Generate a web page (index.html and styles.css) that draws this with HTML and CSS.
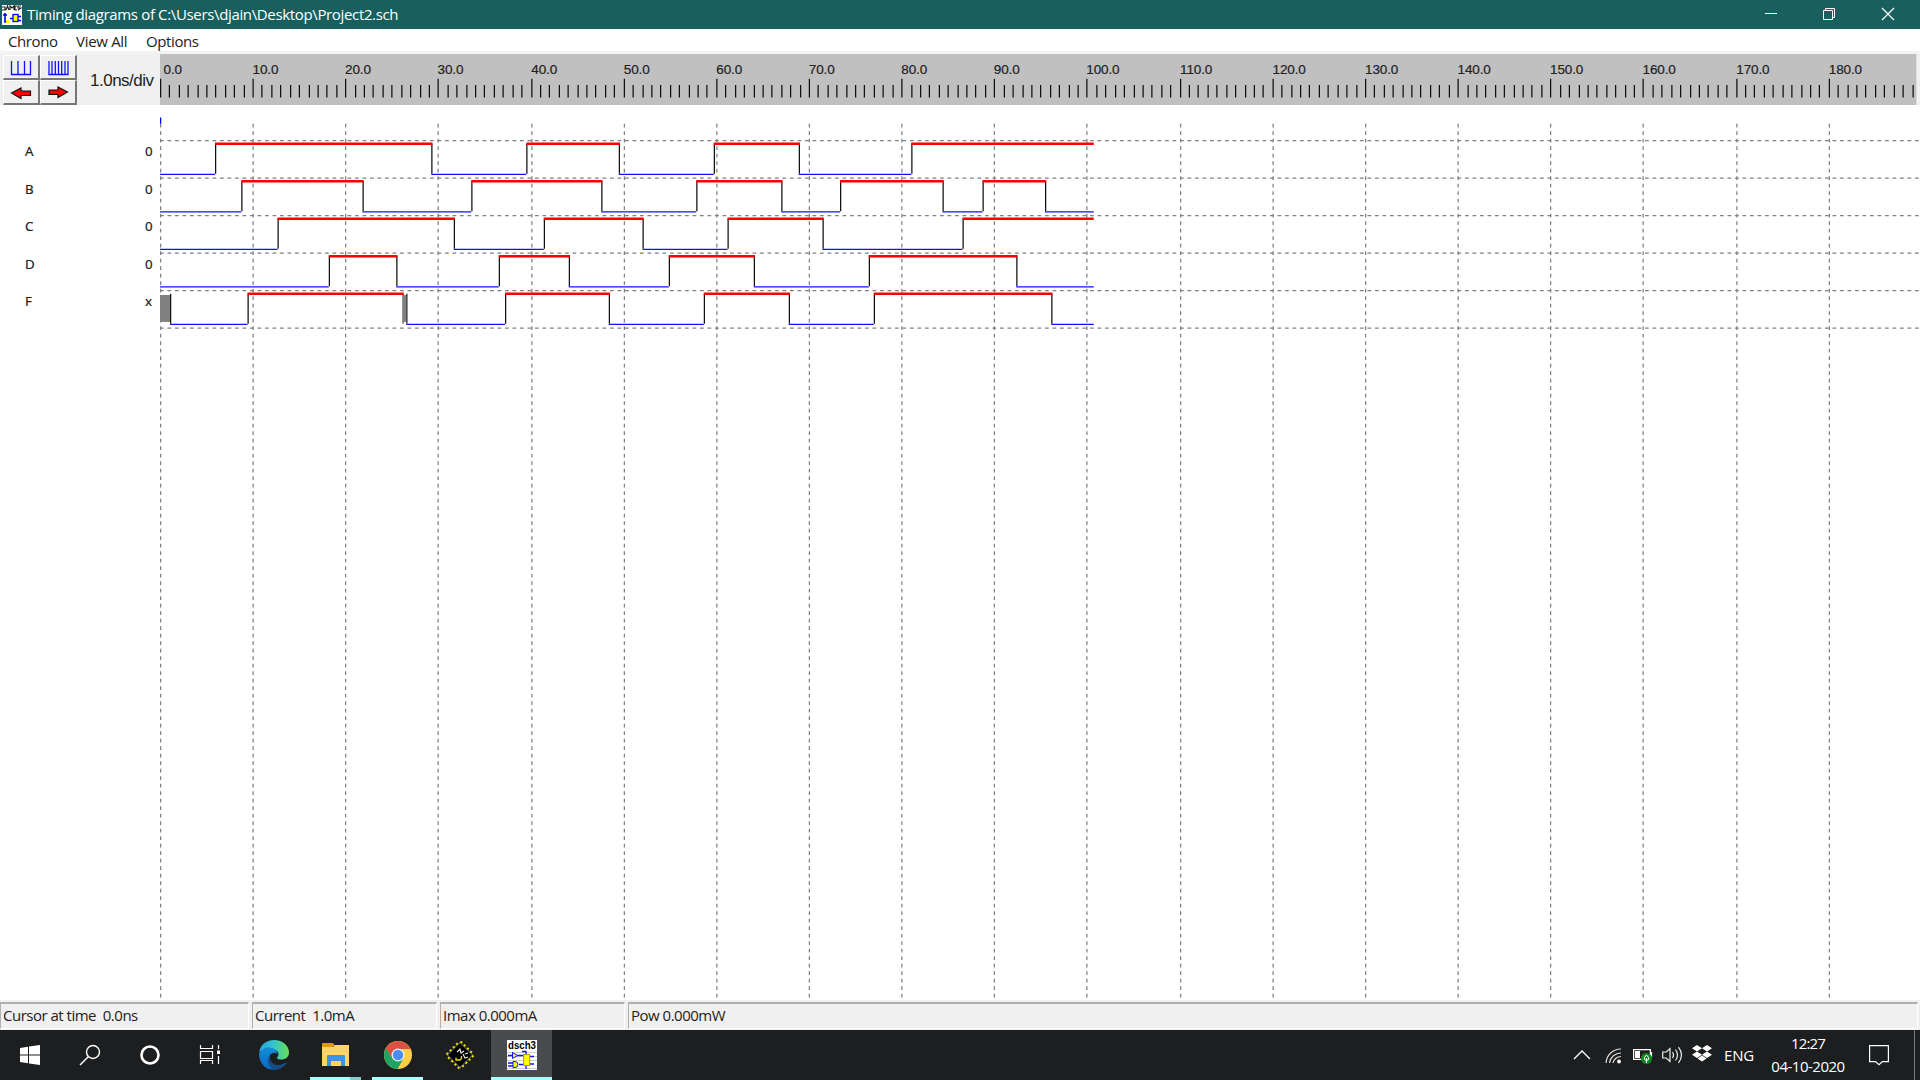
FILE: index.html
```html
<!DOCTYPE html>
<html lang="en">
<head>
<meta charset="utf-8">
<title>Timing diagrams</title>
<link rel="stylesheet" href="styles.css">
</head>
<body>
<div class="screen">
  <header class="titlebar">
    <svg class="app-icon" width="20" height="20" viewBox="0 0 20 20"><rect width="20" height="20" fill="#fff"/><path d="M0 2h3v3H0M4 5l1.500-4L7 5M8 5V1l2 2 2-2v4M15 1h-2v4h2M19 1h-3v2h3l-3 2" fill="none" stroke="#222" stroke-width="1.200"/><path d="M3 8v9h4M1 10h4M8 13.500h3M16 11.500h3M16 15.500h3" fill="none" stroke="#00f" stroke-width="1.600"/><rect x="11" y="9.500" width="5" height="7" fill="#ff0" stroke="#00f" stroke-width="1.300"/><rect x="4" y="15" width="3" height="3" fill="#ff0"/></svg>
    <span class="title">Timing diagrams of C:\Users\djain\Desktop\Project2.sch</span>
    <div class="controls">
      <svg width="58" height="29" viewBox="0 0 58 29"><path d="M23 13.500h12" stroke="#fff"/></svg>
      <svg width="58" height="29" viewBox="0 0 58 29"><path d="M23.500 10.500h9v9h-9zM25.500 10.500v-2h9v9h-2" fill="none" stroke="#fff"/></svg>
      <svg width="58" height="29" viewBox="0 0 58 29"><path d="M24 8l12 12M36 8L24 20" stroke="#fff" stroke-width="1.200"/></svg>
    </div>
  </header>
  <nav class="menu"><span class="m1">Chrono</span><span class="m2">View All</span><span class="m3">Options</span></nav>
  <section class="toolbar">
    <div class="buttons">
      <button class="tool"><svg width="34" height="22" viewBox="0 0 34 22"><path d="M7.500 5v13.500h19V5M14 5v13M20.500 5v13" fill="none" stroke="#11f" stroke-width="1.300"/></svg></button>
      <button class="tool"><svg width="34" height="22" viewBox="0 0 34 22"><path d="M8 5v13.500h19V5M11 5v13M14.300 5v13M17.500 5v13M20.700 5v13M24 5v13" fill="none" stroke="#11f" stroke-width="1.300"/></svg></button>
      <button class="tool"><svg width="34" height="22" viewBox="0 0 34 22"><path d="M7.500 12L17 7v3h9.500v4.500H17v3z" fill="#f00" stroke="#111" stroke-width="1.200"/></svg></button>
      <button class="tool"><svg width="34" height="22" viewBox="0 0 34 22"><path d="M26.500 11L17 6v3H8v4.500h9v3z" fill="#f00" stroke="#111" stroke-width="1.200"/></svg></button>
    </div>
    <span class="scale">1.0ns/div</span>
    <svg class="ruler" id="ruler" width="1757" height="51" viewBox="160 54 1757 51"></svg>
  </section>
  <main class="chart"><svg id="chart" width="1920" height="895" viewBox="0 105 1920 895"></svg></main>
  <footer class="status">
    <span class="p1">Cursor at time  0.0ns</span><span class="p2">Current  1.0mA</span><span class="p3">Imax 0.000mA</span><span class="p4">Pow 0.000mW</span>
  </footer>
  <div class="taskbar">
    <div class="system">
      <svg width="60" height="50" viewBox="0 0 60 50"><path d="M20 18l8-1.200V24.500h-8zM29 16.600L40 15v9.500H29zM20 25.500h8v7.700L20 32zM29 25.500h11V35l-11-1.600z" fill="#fff"/></svg>
      <svg width="60" height="50" viewBox="0 0 60 50"><circle cx="33" cy="22" r="6.500" fill="none" stroke="#fff" stroke-width="1.400"/><path d="M28.500 26.500L20 35" stroke="#fff" stroke-width="1.500"/></svg>
      <svg width="60" height="50" viewBox="0 0 60 50"><circle cx="30" cy="25" r="8.500" fill="none" stroke="#fff" stroke-width="2.600"/></svg>
      <svg width="60" height="50" viewBox="0 0 60 50"><path d="M20.500 15v3.500h12V15M20.500 34v-3.500h12V34M20.500 21.500h12v7h-12zM38.500 15v4M38.500 26v8" fill="none" stroke="#fff" stroke-width="1.200"/><rect x="37" y="20.500" width="3" height="3.500" fill="#fff"/></svg>
    </div>
    <div class="apps">
      <div class="app"><svg width="30" height="30" viewBox="0 0 30 30"><defs><linearGradient id="e1" x1="0" x2="1"><stop offset="0" stop-color="#22a6e0"/><stop offset=".5" stop-color="#35c6cc"/><stop offset="1" stop-color="#67de50"/></linearGradient><linearGradient id="e2" x1="0" x2="0" y2="1"><stop offset="0" stop-color="#168fd9"/><stop offset="1" stop-color="#0867bf"/></linearGradient></defs><path d="M0 13C1 5 7 0 15 0c9 0 15 6 15 12.500 0 4.500-3.500 7-7.500 7-4.500 0-5-1.500-4-2.500 3-4-1-8-6-8-5 0-10 0-12.500 4z" fill="url(#e1)"/><path d="M0 14C3 8 8 6 13 8c4 1.500 5.500 4 5.500 6-2-2-6-1.500-7.500 1.500-2.500 5 0 11 5 14C7 31 0 23 0 14z" fill="url(#e2)"/><path d="M12 13.500c-3 6 1 11.500 7 11.500 3.500 0 6-1.500 8-2.700.8-.4 1 .2.600.8C25 27.500 20.500 30 15.500 30 9 28 6.500 19 12 13.500z" fill="#174c82"/></svg></div>
      <div class="app stacked"><svg width="28" height="24" viewBox="0 0 28 24"><path d="M0 1q0-1 1-1h10l2 3h-2v4H0z" fill="#dc9c08"/><path d="M0 4h11l2-2h14v21H0z" fill="#ffd466"/><path d="M5 23V13q0-1 1-1h16q1 0 1 1v10h-4v-5H9v5z" fill="#3c95d8"/></svg></div>
      <div class="app open"><svg width="28" height="28" viewBox="0 0 28 28"><circle cx="14" cy="14" r="14" fill="#ffcd46"/><path d="M1.900 7A14 14 0 0 1 26.100 7L26 8H14L8 17.500z" fill="#dd5144"/><path d="M1.900 7A14 14 0 0 0 13.500 28L19.500 17.500 14 20.200 8.500 17.500z" fill="#1da462"/><circle cx="14" cy="14" r="6.500" fill="#f1f1f1"/><circle cx="14" cy="14" r="5.200" fill="#4c8bf5"/></svg></div>
      <div class="app"><svg width="30" height="30" viewBox="0 0 30 30"><path d="M15 2L28 15 15 28 2 15z" fill="none" stroke="#e8e000" stroke-width="3.600" stroke-dasharray="2.200 2.400"/><path d="M15 2.500L27.500 15 15 27.500 2.500 15z" fill="#000" stroke="#888" stroke-width=".8"/><path d="M11 17.500v2.500h4l1.500-1.500V16" fill="none" stroke="#e8e000" stroke-width="1.300"/><path d="M12 12l3-3 1 4 3-2M18 14l2 4 3-1M20 14l3-1" fill="none" stroke="#eee" stroke-width="1.100"/></svg></div>
      <div class="app open active"><svg width="30" height="30" viewBox="0 0 30 30"><rect width="30" height="30" fill="#fff"/><path d="M0 12.500h30M0 16.500h30M0 20.500h30M0 28.500h30" stroke="#ccc"/><text class="icon-text" x="1" y="9" textLength="28" lengthAdjust="spacingAndGlyphs">dsch3</text><path d="M1 15.500h5M10 15.500h7M1 23h5M1 26h5M12 24.500h5M23 16.500h4M23 24h4M15 11.500h4V14M19 25v4" fill="none" stroke="#11f" stroke-width="1.300"/><path d="M5.500 12.500l5 3-5 3zM6 21.500h2q3 0 3 3t-3 3H6z" fill="#ff0" stroke="#11f"/><rect x="16.700" y="14.500" width="6" height="11" fill="#ff0" stroke="#a90"/></svg></div>
    </div>
    <div class="tray">
      <svg class="chev" width="18" height="12" viewBox="0 0 18 12"><path d="M1 10l8-8 8 8" fill="none" stroke="#fff" stroke-width="1.300"/></svg>
      <svg class="wifi" width="17" height="17" viewBox="0 0 17 17"><g fill="none" stroke="#ddd" stroke-width="1.200"><path d="M1 16A15 15 0 0 1 16 2"/><path d="M4.500 16A11.500 11.500 0 0 1 16 6"/><path d="M8 16a8 8 0 0 1 8-6.500"/></g><circle cx="14" cy="14.500" r="1.900" fill="#fff"/></svg>
      <svg class="batt" width="20" height="17" viewBox="0 0 20 17"><path d="M.6 2.600h16.800v9.800H.6zM18.500 5v5" fill="none" stroke="#fff" stroke-width="1.200"/><path d="M2 4h5v7H2z" fill="#fff"/><circle cx="13.500" cy="11.500" r="5.500" fill="#0f8a1d"/><path d="M13.500 8q3 2.500 2 4.500-2 2-4 0-1-2 2-4.500zM13.500 11v5" fill="none" stroke="#fff"/></svg>
      <svg class="sound" width="21" height="18" viewBox="0 0 21 18"><path d="M.7 6h3.500L8 2.500v13L4.200 12H.7zM10.500 6q2 3 0 6M13.500 3.500q4 5.500 0 11M16.500 1.200q6 7.800 0 15.600" fill="none" stroke="#eee" stroke-width="1.200"/></svg>
      <svg class="drop" width="20" height="17" viewBox="0 0 20 17"><path d="M5 0l5 3.200-5 3.200L0 3.200zM15 0l5 3.200-5 3.200-5-3.200zM5 6.600l5 3.200L5 13 0 9.800zM15 6.600l5 3.200-5 3.200-5-3.200zM10 10.600l4.500 3L10 16.600l-4.500-3z" fill="#fff"/></svg>
      <span class="lang">ENG</span>
      <div class="clock"><span class="time">12:27</span><span class="date">04-10-2020</span></div>
      <svg class="note" width="20" height="21" viewBox="0 0 20 21"><path d="M.6.600h18.800v16h-6L10 19.600l-3.400-3h-6z" fill="none" stroke="#fff" stroke-width="1.200"/></svg>
      <i class="edge"></i>
    </div>
  </div>
</div>
<script src="chart.js"></script>
</body>
</html>
```
FILE: styles.css
```css
* { box-sizing: border-box; }
body { margin: 0; overflow: hidden; background: #fff; font-family: "Open Sans", "Noto Sans", sans-serif; color: #000; }
svg { display: block; flex: none; }
.screen { width: 1920px; height: 1080px; display: flex; flex-direction: column; }
.titlebar { height: 29px; background: #185f5e; display: flex; align-items: center; padding: 0 4px 0 2px; color: #fff; }
.title { margin-left: 5px; font-size: 15px; line-height: 29px; letter-spacing: -0.35px; white-space: pre; }
.controls { margin-left: auto; display: flex; }
.menu { height: 25px; display: flex; border-bottom: 3px solid #f3f3f3; padding-left: 8px; font-size: 15px; line-height: 24px; color: #222; white-space: pre; }
.m1 { width: 68px; letter-spacing: -0.4px; }
.m2 { width: 70px; letter-spacing: -0.3px; }
.m3 { letter-spacing: -0.4px; }
.toolbar { height: 51px; display: flex; background: #f0f0f0; }
.buttons { width: 75px; margin-left: 3px; display: grid; grid-template-columns: 37px 37px; grid-template-rows: 25px 25px; padding-top: 1px; }
.tool { padding: 0; margin: 0; background: #f0f0f0; border: 1px solid; border-color: #fff #777 #777 #fff; border-right-width: 2px; border-bottom-width: 2px; border-radius: 0; overflow: hidden; }
.scale { width: 82px; padding-left: 12px; font: 17px/53px "Liberation Sans", Arial, sans-serif; letter-spacing: -0.5px; color: #222; white-space: nowrap; }
.ruler { background: #c0c0c0; }
.ruler text { font: 13.5px "Liberation Sans", Arial, sans-serif; fill: #222; stroke: #222; stroke-width: 0.2px; letter-spacing: -0.1px; }
.chart { height: 895px; background: #fff; }
.chart text { font: 13.3px "Noto Sans", sans-serif; fill: #222; stroke: #222; stroke-width: 0.2px; }
.status { height: 30px; background: #f0f0f0; display: flex; gap: 3px; padding: 2px 2px 1px 0; font-size: 15px; line-height: 23px; color: #222; white-space: pre; }
.status span { border: 1px solid; border-top-width: 2px; border-color: #b0b0b0 #fff #fff #b0b0b0; padding-left: 2px; letter-spacing: -0.5px; }
.p1 { width: 249px; }
.p2, .p3 { width: 185px; }
.p4 { flex: 1; }
.taskbar { height: 50px; background: #1c1e20; display: flex; color: #fff; }
.system { display: flex; width: 243px; }
.apps { display: flex; gap: 1px; }
.app { width: 61px; height: 50px; display: flex; align-items: center; justify-content: center; position: relative; }
.app.stacked svg { margin-top: -1px; }
.app.open::after, .app.stacked::after { content: ""; position: absolute; bottom: 0; left: 5px; right: 5px; height: 3px; background: #aff; }
.app.stacked::after { background: linear-gradient(90deg, #aff 40px, #8cc 40px); }
.app.active { background: #4a4b4d; }
.app.active::after { left: 0; right: 0; }
.tray { margin-left: auto; width: 347px; display: flex; align-items: center; font-size: 15px; }
.wifi { margin-left: 14px; }
.batt { margin-left: 11px; }
.sound { margin-left: 9px; }
.drop { margin-left: 9px; margin-top: -3px; }
.lang { margin-left: 12px; width: 42px; letter-spacing: -0.2px; }
.clock { width: 84px; display: flex; flex-direction: column; text-align: center; line-height: 23px; }
.time { letter-spacing: -0.8px; }
.date { letter-spacing: -0.5px; }
.note { margin-left: 19px; }
.edge { width: 1px; height: 50px; background: #777; margin-left: 25px; }
.icon-text { font: bold 10px "Liberation Sans", Arial, sans-serif; fill: #000; }
```
FILE: chart.js
```js
// The application draws on a 96-dpi grid that the display scales by 1.25.
const S = 1.25;
const tickX = i => 128 + Math.floor(7.416 * i + 0.38);
const rect = (x, y, w, h, c) => `<rect x="${x * S}" y="${y * S}" width="${w * S}" height="${h * S}" fill="${c}"/>`;
const dash = (x1, y1, x2, y2) => `<line x1="${x1 * S}" y1="${y1 * S}" x2="${x2 * S}" y2="${y2 * S}" stroke="#808080" stroke-width="1.25" stroke-dasharray="3.75 3.75"/>`;

let ruler = '';
for (let i = 0; i < 190; i++) {
  const x = tickX(i), major = i % 10 === 0;
  ruler += rect(x, major ? 63 : 68, 1, major ? 15 : 10, '#111');
  if (major) ruler += `<text x="${x * S + (i ? 0 : 3.5)}" y="74">${i}.0</text>`;
}
ruler += '<rect x="1916" y="54" width="1" height="51" fill="#ddd"/>';
document.getElementById('ruler').innerHTML = ruler;

const signals = [
  ['A', '0', [172, 345, 421, 495, 571, 639, 729]],
  ['B', '0', [193, 290, 377, 481, 557, 625, 672, 754, 786, 836]],
  ['C', '0', [222, 363, 435, 514, 582, 658, 770]],
  ['D', '0', [263, 317, 399, 455, 535, 603, 695, 813]],
  ['F', 'x', [198, 322, 404, 487, 563, 631, 699, 841]]
];
const END = 875;
let out = '';
for (let i = 0; i < 190; i += 10) out += dash(tickX(i) + 0.5, 99, tickX(i) + 0.5, 798);
for (let k = 0; k < 6; k++) out += dash(128, 112.5 + 30 * k, 1535, 112.5 + 30 * k);
out += rect(128, 94, 1, 5, '#00f');
signals.forEach(([name, value, edges], k) => {
  const y = 112 + 30 * k, base = 156.3 + 37.5 * k;
  out += `<text x="25" y="${base}">${name}</text><text x="145" y="${base}">${value}</text>`;
  let x = 128, high = false;
  if (name === 'F') {
    out += rect(128, y + 4, 8, 21.5, '#808080') + rect(136, y + 3, 1, 24, '#111');
    x = 136;
  }
  for (const e of [...edges, END]) {
    let from = x;
    if (name === 'F' && x === 322) {
      out += rect(322, y + 4, 3, 21.5, '#808080') + rect(325, y + 3, 1, 24, '#222');
      from = 325;
    }
    if (e !== END) out += rect(e, y + 3, 1, 24, name === 'F' && e === 322 ? '#555' : '#111');
    out += high ? rect(from, y + 2, e - from + (e === END ? 0 : 1), 2, '#f00') : rect(from, y + 27, e - from, 1, '#11f');
    x = e;
    high = !high;
  }
});
document.getElementById('chart').innerHTML = out;
```
